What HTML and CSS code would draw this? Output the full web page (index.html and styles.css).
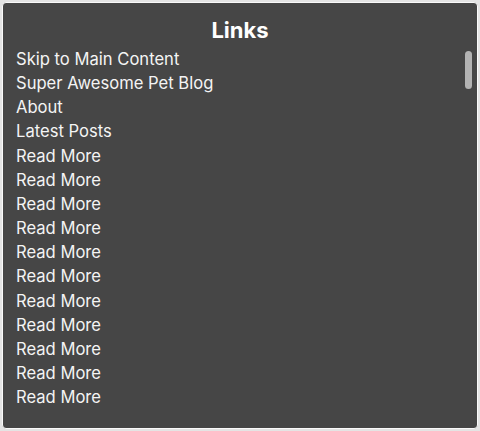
FILE: index.html
```html
<!DOCTYPE html>
<html lang="en">
<head>
  <meta charset="UTF-8" />
  <title>Links</title>
  <link rel="stylesheet" href="styles.css">
</head>
<body>

<div class="rotor">
  <h2>Links</h2>
  <div class="rotor-list">
    <ul>
      <li>Skip to Main Content</li>
      <li>Super Awesome Pet Blog</li>
      <li>About</li>
      <li>Latest Posts</li>
      <li>Read More</li>
      <li>Read More</li>
      <li>Read More</li>
      <li>Read More</li>
      <li>Read More</li>
      <li>Read More</li>
      <li>Read More</li>
      <li>Read More</li>
      <li>Read More</li>
      <li>Read More</li>
      <li>Read More</li>
    </ul>
    <div class="scroll-thumb"></div>
  </div>
</div>

</body>
</html>
```

FILE: styles.css
```css
html, body {
  height: 100%;
}
body {
  margin: 0;
  padding: 2px;
  box-sizing: border-box;
  background: #e4e4e4;
  font-family: Inter, 'Liberation Sans', sans-serif;
}
.rotor {
  height: 100%;
  box-sizing: border-box;
  background: #464646;
  border: 1px solid #fafafa;
  border-radius: 4px;
  color: #f4f4f4;
  display: flex;
  flex-direction: column;
}
.rotor h2 {
  margin: 0;
  padding-top: 14px;
  text-align: center;
  font-size: 22px;
  font-weight: 700;
  line-height: 27px;
  color: #fff;
}
.rotor-list {
  position: relative;
  flex: 1;
}
.rotor-list ul {
  list-style: none;
  margin: 0;
  padding: 3px 0 0 13px;
}
.rotor-list li {
  font-size: 16.6px;
  line-height: 24.15px;
  white-space: nowrap;
}
.scroll-thumb {
  position: absolute;
  right: 5px;
  top: 7px;
  width: 7px;
  height: 38px;
  border-radius: 4px;
  background: #b3b3b3;
}
```
